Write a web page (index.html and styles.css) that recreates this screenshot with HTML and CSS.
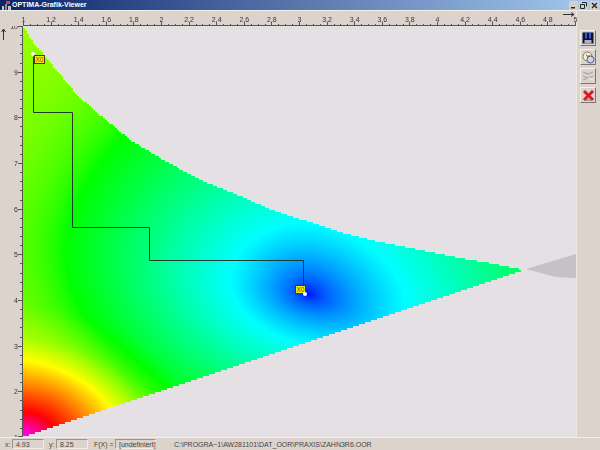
FILE: index.html
```html
<!DOCTYPE html>
<html lang="en">
<head>
    <meta charset="UTF-8">
    <title>OPTIMA-Grafik-Viewer</title>
    <link rel="stylesheet" href="styles.css">
</head>
<body>
    <div class="window">
        <div class="titlebar">
            <svg class="app-icon" width="9" height="9" viewBox="0 0 9 9">
                <rect x="0" y="5" width="2" height="4" fill="#c8c4b8"/>
                <rect x="3" y="3" width="2" height="6" fill="#8890a0"/>
                <rect x="6" y="5" width="3" height="4" fill="#c8c4b8"/>
                <rect x="4" y="0" width="4" height="3" fill="#e04020"/>
            </svg>
            <span class="title-text">OPTIMA-Grafik-Viewer</span>
            <div class="win-btns">
                <div class="win-btn"><svg width="7" height="7" viewBox="0 0 7 7"><rect x="1" y="5" width="4" height="1.5" fill="#222"/></svg></div>
                <div class="win-btn"><svg width="7" height="7" viewBox="0 0 7 7"><path d="M2 .5h4.5v4M.5 2.5h4v4h-4z" fill="none" stroke="#222"/></svg></div>
                <div class="win-btn close"><svg width="7" height="7" viewBox="0 0 7 7"><path d="M1 1l5 5M6 1l-5 5" stroke="#222" stroke-width="1.3"/></svg></div>
            </div>
        </div>
        <div class="content">
            <div class="corner"></div>
            <div class="axis-top" id="axisTop">
                <canvas id="topTicks" width="553" height="15"></canvas>
                <svg class="arrow-x" width="12" height="5" viewBox="0 0 12 5"><path d="M0 2.5h11M8 .5l3 2-3 2" fill="none" stroke="#333"/></svg>
            </div>
            <div class="toolbar">
                <div class="tool-btn">
                    <svg width="12" height="12" viewBox="0 0 12 12">
                        <rect x="0.5" y="0.5" width="11" height="11" fill="#101030"/>
                        <rect x="3" y="0.5" width="2" height="6" fill="#3858e0"/>
                        <rect x="7" y="0.5" width="2" height="6" fill="#3858e0"/>
                        <rect x="2.5" y="8" width="7" height="3.5" fill="#b0b0c0"/>
                    </svg>
                </div>
                <div class="tool-btn">
                    <svg width="13" height="13" viewBox="0 0 13 13">
                        <circle cx="5.5" cy="5.5" r="4.5" fill="#f4f0d8" stroke="#807850"/>
                        <circle cx="8.5" cy="8.5" r="3.5" fill="#d0d4e8" stroke="#505880"/>
                        <path d="M4 3.5l1.5 2 2-1" fill="none" stroke="#a04030"/>
                    </svg>
                </div>
                <div class="tool-btn">
                    <svg width="12" height="12" viewBox="0 0 12 12">
                        <path d="M1 2l5 2 5-2M1 6l5 2 5-2M1 10l5-2" fill="none" stroke="#a8a49c" stroke-width="1.2"/>
                        <path d="M11 10l-5-2" fill="none" stroke="#f4f0ea"/>
                    </svg>
                </div>
                <div class="tool-btn">
                    <svg width="13" height="13" viewBox="0 0 13 13">
                        <path d="M2 2l9 9M11 2l-9 9" stroke="#e01820" stroke-width="3"/>
                        <path d="M3 11h7" stroke="#707070"/>
                    </svg>
                </div>
            </div>
            <div class="axis-left" id="axisLeft">
                <canvas id="leftTicks" width="23" height="411"></canvas>
                <svg class="arrow-y" width="5" height="12" viewBox="0 0 5 12"><path d="M2.5 12V1M.5 4l2-3 2 3" fill="none" stroke="#333"/></svg>
            </div>
            <div class="plot">
                <canvas id="plot" width="553" height="411"></canvas>
                <div class="start-dot dot-a"></div>
                <div class="marker marker-a">X0</div>
                <div class="marker marker-b">X0</div>
                <div class="start-dot dot-b"></div>
            </div>
        </div>
        <div class="statusbar">
            <span class="st-label lbl-x">x:</span>
            <span class="field field-x">4.93</span>
            <span class="st-label lbl-y">y:</span>
            <span class="field field-y">8.25</span>
            <span class="st-label lbl-f">F(X) =</span>
            <span class="field field-f">[undefiniert]</span>
            <span class="st-path">C:\PROGRA~1\AW281101\DAT_OOR\PRAXIS\ZAHN3R6.OOR</span>
        </div>
    </div>
    <script src="script.js"></script>
</body>
</html>
```

FILE: styles.css
```css
*{
    margin: 0;
    padding: 0;
    box-sizing: border-box;
}
body{
    background-color: #dcd4cc;
    font-family: "Liberation Sans", Arial, sans-serif;
    overflow: hidden;
}
canvas{
    display: block;
}
.window{
    width: 600px;
    height: 450px;
    display: flex;
    flex-direction: column;
}
.titlebar{
    height: 11px;
    flex: none;
    display: flex;
    align-items: center;
    gap: 1px;
    padding: 0 1px 0 2px;
    background: linear-gradient(to right, #0a246a, #a6caf0);
    border-bottom: 1px solid #f2eee8;
}
.title-text{
    color: #fff;
    font-size: 7px;
    font-weight: bold;
    line-height: 10px;
}
.win-btns{
    margin-left: auto;
    display: flex;
    gap: 1px;
}
.win-btn{
    width: 9px;
    height: 9px;
    background-color: #d4d0c8;
    display: flex;
    align-items: center;
    justify-content: center;
}
.win-btn.close{
    margin-left: 1px;
}
.content{
    flex: 1;
    display: grid;
    grid-template-columns: 23px 553px 24px;
    grid-template-rows: 15px 411px;
}
.axis-top{
    position: relative;
}
.axis-left{
    position: relative;
    overflow: hidden;
}
.axis-top canvas,
.axis-left canvas{
    position: absolute;
    left: 0;
    top: 0;
}
.tick-label{
    position: absolute;
    font-size: 7px;
    line-height: 9px;
    color: #333;
}
.axis-top .tick-label{
    top: 4px;
    transform: translateX(-50%);
}
.axis-left .tick-label{
    right: 5px;
    transform: translateY(-50%);
}
.arrow-x{
    position: absolute;
    right: 1px;
    top: 1px;
}
.arrow-y{
    position: absolute;
    left: 1px;
    top: 2px;
}
.toolbar{
    grid-column: 3;
    grid-row: 1 / 3;
    display: flex;
    flex-direction: column;
    align-items: flex-start;
    gap: 3px;
    padding: 19px 0 0 3px;
    border-left: 1px solid #ece8e2;
}
.tool-btn{
    width: 16px;
    height: 16px;
    display: flex;
    align-items: center;
    justify-content: center;
    background-color: #dcd4cc;
    border: 1px solid;
    border-color: #f4f0ea #777 #777 #f4f0ea;
}
.plot{
    position: relative;
    background-color: #e4e0e4;
}
.marker{
    position: absolute;
    width: 11px;
    height: 9px;
    background-color: #ffe800;
    border: 1px solid #443c10;
    font-size: 6.5px;
    line-height: 7px;
    text-align: center;
    color: #705010;
}
.marker-a{
    left: 11px;
    top: 29px;
}
.marker-b{
    left: 272px;
    top: 259px;
}
.start-dot{
    position: absolute;
    width: 4px;
    height: 4px;
    background-color: #fff;
    border-radius: 50%;
}
.dot-a{
    left: 8px;
    top: 26px;
}
.dot-b{
    left: 280px;
    top: 266px;
}
.statusbar{
    height: 13px;
    flex: none;
    display: flex;
    align-items: center;
    font-size: 7px;
    white-space: nowrap;
    color: #444;
    background-color: #dcd4cc;
    border-top: 1px solid #f2eee8;
}
.st-label{
    flex: none;
}
.field{
    flex: none;
    height: 10px;
    line-height: 9px;
    padding-left: 3px;
    border: 1px solid;
    border-color: #9a958c #f0ece6 #f0ece6 #9a958c;
}
.lbl-x{
    margin-left: 5px;
    width: 7px;
}
.field-x{
    width: 32px;
}
.lbl-y{
    margin-left: 5px;
    width: 7px;
}
.field-y{
    width: 32px;
}
.lbl-f{
    margin-left: 6px;
    width: 21px;
}
.field-f{
    width: 41px;
}
.st-path{
    margin-left: 18px;
}
```

FILE: script.js
```js
var plot = document.getElementById("plot");
var ctx = plot.getContext("2d");

// plot starts at page x=23, y=26
var OX = 23, OY = 26;
var STEP = 2;

var upper = [[23,26],[33,42],[47,59],[63,78],[77,95],[100,115],[133,142],[167,162],[200,180],[233,193],[267,208],[300,219],[340,232],[380,242],[420,250],[460,258],[500,265],[524,270]];
var bump = [[0,145],[25,85],[57,50],[77,29],[97,12],[130,0],[9999,0]];

function lerp(table, x){
    for(var i=1;i<table.length;i++){
        if(x <= table[i][0]){
            var a = table[i-1], b = table[i];
            return a[1] + (b[1]-a[1]) * (x-a[0]) / (b[0]-a[0]);
        }
    }
    return table[table.length-1][1];
}

function lower(x){
    return 437 - (x-23) * 167 / 501;
}

function hue(x, y){
    var u = x-308, v = y-294;
    var p = 0.96*u + 0.28*v;
    var q = -0.28*u + 0.96*v;
    var a = p/(p<0 ? 80 : 100);
    var b = q/(q<0 ? 70 : 50);
    var d = Math.sqrt(a*a + b*b);
    var h;
    if(d < 1){
        h = 240 - 60*Math.pow(d, 0.6);
    }else if(d < 3.1){
        h = 180 - 60*(d-1)/2.1;
    }else{
        h = 120 - 38*(1-Math.exp(-(d-3.1)/0.7));
    }
    var dx = (x-23)/1.35, dy = 437-y;
    h -= lerp(bump, Math.sqrt(dx*dx + dy*dy));
    return h;
}

function drawField(){
    for(var x=23;x<524;x+=STEP){
        var top = Math.round(lerp(upper, x+1)/STEP)*STEP;
        var bottom = Math.round(lower(x+1)/STEP)*STEP;
        for(var y=top;y<bottom;y+=STEP){
            ctx.fillStyle = "hsl(" + hue(x+1,y+1) + ",100%,50%)";
            ctx.fillRect(x-OX, y-OY, STEP, STEP);
        }
    }
}

function drawGrey(){
    ctx.fillStyle = "#c4c2c4";
    ctx.beginPath();
    ctx.moveTo(526-OX, 269-OY);
    ctx.lineTo(576-OX, 254-OY);
    ctx.lineTo(576-OX, 278-OY);
    ctx.lineTo(556-OX, 277-OY);
    ctx.closePath();
    ctx.fill();
}

function drawPath(){
    var pts = [[33,56],[33,112],[72,112],[72,227],[149,227],[149,260],[303,260],[303,288]];
    ctx.strokeStyle = "#1c3c30";
    ctx.lineWidth = 1;
    ctx.beginPath();
    for(var i=0;i<pts.length;i++){
        ctx.lineTo(pts[i][0]-OX+0.5, pts[i][1]-OY+0.5);
    }
    ctx.stroke();
}

function addLabel(parent, text, style){
    var s = document.createElement("span");
    s.className = "tick-label";
    s.textContent = text;
    for(var k in style){
        s.style[k] = style[k];
    }
    parent.appendChild(s);
}

function drawTopAxis(){
    var c = document.getElementById("topTicks").getContext("2d");
    var box = document.getElementById("axisTop");
    c.fillStyle = "#555";
    c.fillRect(0, 14, 553, 1);
    for(var i=0;i<=80;i++){
        var x = Math.round(i*552/80);
        var len = i%4==0 ? 3 : 1;
        c.fillRect(x, 14-len, 1, len);
    }
    for(var j=0;j<=20;j++){
        var val = 1 + j*0.2;
        addLabel(box, String(Math.round(val*10)/10), {left: (j*27.6+0.5) + "px"});
    }
}

function drawLeftAxis(){
    var c = document.getElementById("leftTicks").getContext("2d");
    var box = document.getElementById("axisLeft");
    c.fillStyle = "#555";
    c.fillRect(22, 0, 1, 411);
    for(var i=0;i<=45;i++){
        var y = Math.round(i*411/45);
        var len = i%5==0 ? 4 : 2;
        c.fillRect(22-len, Math.min(y,410), len, 1);
    }
    for(var v=1;v<=10;v++){
        addLabel(box, String(v), {top: ((10-v)*45.67) + "px"});
    }
}

drawField();
drawGrey();
drawPath();
drawTopAxis();
drawLeftAxis();
```
